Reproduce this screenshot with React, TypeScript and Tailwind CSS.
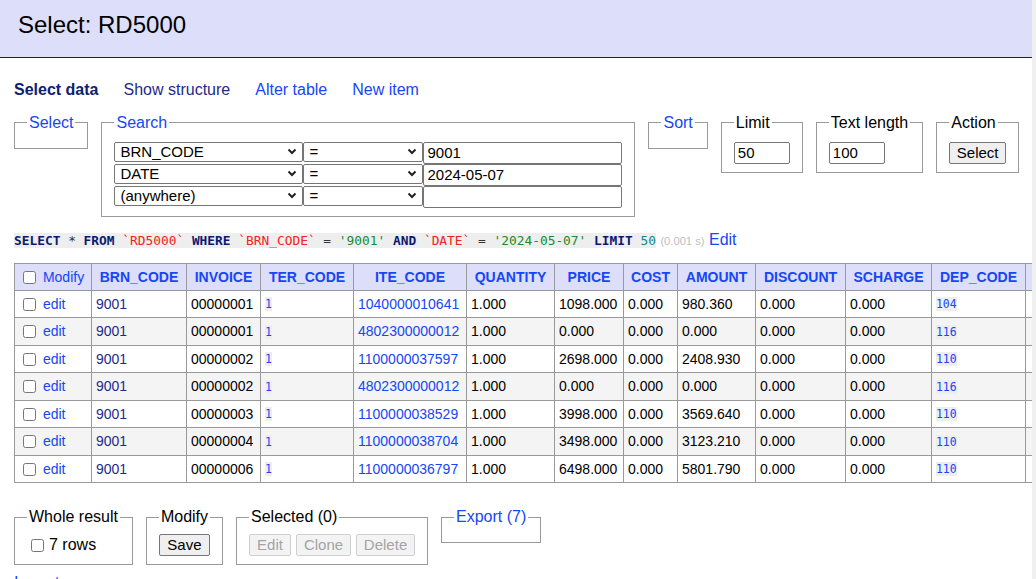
import React from 'react';

const LINK = 'text-[#1646f5]';
const VISITED = 'text-[#1c2b88]';

const rows = [
  ['00000001', '1040000010641', '1098.000', '980.360', '104'],
  ['00000001', '4802300000012', '0.000', '0.000', '116'],
  ['00000002', '1100000037597', '2698.000', '2408.930', '110'],
  ['00000002', '4802300000012', '0.000', '0.000', '116'],
  ['00000003', '1100000038529', '3998.000', '3569.640', '110'],
  ['00000004', '1100000038704', '3498.000', '3123.210', '110'],
  ['00000006', '1100000036797', '6498.000', '5801.790', '110'],
];

const columns = [
  { name: 'BRN_CODE', w: 95 },
  { name: 'INVOICE', w: 74 },
  { name: 'TER_CODE', w: 93 },
  { name: 'ITE_CODE', w: 113 },
  { name: 'QUANTITY', w: 88 },
  { name: 'PRICE', w: 69 },
  { name: 'COST', w: 54 },
  { name: 'AMOUNT', w: 78 },
  { name: 'DISCOUNT', w: 90 },
  { name: 'SCHARGE', w: 86 },
  { name: 'DEP_CODE', w: 94 },
  { name: '', w: 110 },
];

function Chevron() {
  return (
    <svg width="10" height="7" viewBox="0 0 10 7" className="shrink-0">
      <path d="M1.5 1.5 L5 5 L8.5 1.5" fill="none" stroke="#222" strokeWidth="2" />
    </svg>
  );
}

function FakeSelect({ text, className }: { text: string; className: string }) {
  return (
    <div
      className={`flex items-center justify-between h-[20px] border border-[#767676] rounded-[2px] bg-white pl-[5px] pr-[5px] text-[15px] leading-[18px] ${className}`}
    >
      <span>{text}</span>
      <Chevron />
    </div>
  );
}

function Field({
  legend,
  link,
  children,
}: {
  legend: string;
  link?: boolean;
  children?: React.ReactNode;
}) {
  return (
    <fieldset className="shrink-0 border border-[#999] px-[12px] pb-[8px] pt-[8px] mr-[13px]">
      <legend className={`px-[2px] whitespace-nowrap text-[16px] leading-[18px] ${link ? LINK : ''}`}>{legend}</legend>
      {children}
    </fieldset>
  );
}

function Button({ label, disabled, w }: { label: string; disabled?: boolean; w: string }) {
  return (
    <button
      className={`h-[22px] rounded-[2px] border text-[15px] leading-[18px] text-center ${w} ${
        disabled ? 'border-[#cfcfcf] bg-[#f3f3f3] text-[#a3a3a3]' : 'border-[#767676] bg-[#efefef] text-black'
      }`}
    >
      {label}
    </button>
  );
}

function Mono({ children }: { children: React.ReactNode }) {
  return (
    <code className={`bg-[#eee] font-['DejaVu_Sans_Mono',monospace] text-[11.4px] ${LINK}`}>{children}</code>
  );
}

function TextBox({ value, w }: { value: string; w: string }) {
  return (
    <div className={`h-[22px] border border-[#767676] rounded-[2px] pl-[3px] text-[15px] leading-[20px] ${w}`}>
      {value}
    </div>
  );
}

export default function App() {
  const cell = 'border border-[#999] px-[4px] whitespace-nowrap';
  return (
    <div className="flex h-[579px] overflow-hidden bg-white font-['Liberation_Sans',Arial,sans-serif] text-black">
      <div className="w-[1032px] shrink-0 overflow-hidden">
        <h1 className="h-[58px] bg-[#dcdefa] border-b border-[#222] pl-[18px] pt-[11px] text-[24px] leading-[28px] font-normal">
          Select: RD5000
        </h1>

        <div className="flex gap-[25px] pl-[14px] mt-[22.5px] text-[16px] leading-[18px]">
          <span className="font-bold text-[#0f2070]">Select data</span>
          <span className={VISITED}>Show structure</span>
          <span className={LINK}>Alter table</span>
          <span className={LINK}>New item</span>
        </div>

        <div className="flex items-start pl-[14px] mt-[15px]">
          <Field legend="Select" link />
          <Field legend="Search" link>
            <div className="pt-[2px]">
              {[
                ['BRN_CODE', '9001'],
                ['DATE', '2024-05-07'],
                ['(anywhere)', ''],
              ].map(([col, val]) => (
                <div key={col} className="flex items-start h-[22px]">
                  <FakeSelect text={col} className="w-[189px]" />
                  <FakeSelect text="=" className="w-[120px]" />
                  <TextBox value={val} w="w-[199px]" />
                </div>
              ))}
            </div>
          </Field>
          <Field legend="Sort" link />
          <Field legend="Limit">
            <div className="pt-[2px]">
              <TextBox value="50" w="w-[56px]" />
            </div>
          </Field>
          <Field legend="Text length">
            <div className="pt-[2px]">
              <TextBox value="100" w="w-[56px]" />
            </div>
          </Field>
          <Field legend="Action">
            <div className="pt-[2px] flex">
              <Button label="Select" w="w-[57px]" />
            </div>
          </Field>
        </div>

        <p className="pl-[14px] mt-[13px] text-[16px] leading-[19px] whitespace-nowrap">
          <code className="bg-[#eee] font-['DejaVu_Sans_Mono',monospace] text-[12.85px] text-[#333]">
            <b className="text-[#0a1a6e]">SELECT</b> * <b className="text-[#0a1a6e]">FROM</b>{' '}
            <span className="text-[#ee2222]">`RD5000`</span> <b className="text-[#0a1a6e]">WHERE</b>{' '}
            <span className="text-[#ee2222]">`BRN_CODE`</span> ={' '}
            <span className="text-[#1a8a2a]">'9001'</span> <b className="text-[#0a1a6e]">AND</b>{' '}
            <span className="text-[#ee2222]">`DATE`</span> ={' '}
            <span className="text-[#1a8a2a]">'2024-05-07'</span> <b className="text-[#0a1a6e]">LIMIT</b>{' '}
            <span className="text-[#168585]">50</span>
          </code>{' '}
          <span className="text-[11.2px] text-[#c0c0c0]">(0.001 s)</span> <span className={LINK}>Edit</span>
        </p>

        <div className="pl-[14px] mt-[12px]">
          <table className="table-fixed text-[14px] leading-[16px]" style={{ width: 77 + columns.reduce((s, c) => s + c.w, 0) }}>
            <colgroup>
              <col style={{ width: 77 }} />
              {columns.map((c, i) => (
                <col key={i} style={{ width: c.w }} />
              ))}
            </colgroup>
            <thead>
              <tr className="bg-[#dcdefa] h-[27px]">
                <td className={`${cell} text-left`}>
                  <input type="checkbox" className="ml-[4px] mr-[3px] align-[-2px]" />{' '}
                  <span className={LINK}>Modify</span>
                </td>
                {columns.map((c, i) => (
                  <th key={i} className={`${cell} text-center font-bold ${LINK}`}>
                    {c.name}
                  </th>
                ))}
              </tr>
            </thead>
            <tbody>
              {rows.map((r, i) => (
                <tr key={i} className={`h-[27.5px] ${i % 2 === 1 ? 'bg-[#f4f4f4]' : 'bg-white'}`}>
                  <td className={cell}>
                    <input type="checkbox" className="ml-[4px] mr-[3px] align-[-2px]" />{' '}
                    <span className={LINK}>edit</span>
                  </td>
                  <td className={`${cell} ${VISITED}`}>9001</td>
                  <td className={cell}>{r[0]}</td>
                  <td className={cell}>
                    <Mono>1</Mono>
                  </td>
                  <td className={`${cell} ${LINK}`}>{r[1]}</td>
                  <td className={cell}>1.000</td>
                  <td className={cell}>{r[2]}</td>
                  <td className={cell}>0.000</td>
                  <td className={cell}>{r[3]}</td>
                  <td className={cell}>0.000</td>
                  <td className={cell}>0.000</td>
                  <td className={cell}>
                    <Mono>{r[4]}</Mono>
                  </td>
                  <td className={cell}></td>
                </tr>
              ))}
            </tbody>
          </table>
        </div>

        <div className="flex items-start pl-[14px] mt-[25px]">
          <Field legend="Whole result">
            <label className="flex items-center h-[22px] text-[16px]">
              <input type="checkbox" className="ml-[4px] mr-[3px]" />
              <span className="ml-[2px]">7 rows</span>
            </label>
          </Field>
          <Field legend="Modify">
            <div className="flex">
              <Button label="Save" w="w-[51px]" />
            </div>
          </Field>
          <Field legend="Selected (0)">
            <div className="flex gap-[5px]">
              <Button label="Edit" disabled w="w-[42px]" />
              <Button label="Clone" disabled w="w-[55px]" />
              <Button label="Delete" disabled w="w-[59px]" />
            </div>
          </Field>
          <Field legend="Export (7)" link />
        </div>

        <p className={`pl-[14px] mt-[9px] text-[16px] leading-[18px] ${LINK}`}>Import</p>
      </div>
      <div className="w-[4px] bg-[#f0f0f0]" />
    </div>
  );
}
